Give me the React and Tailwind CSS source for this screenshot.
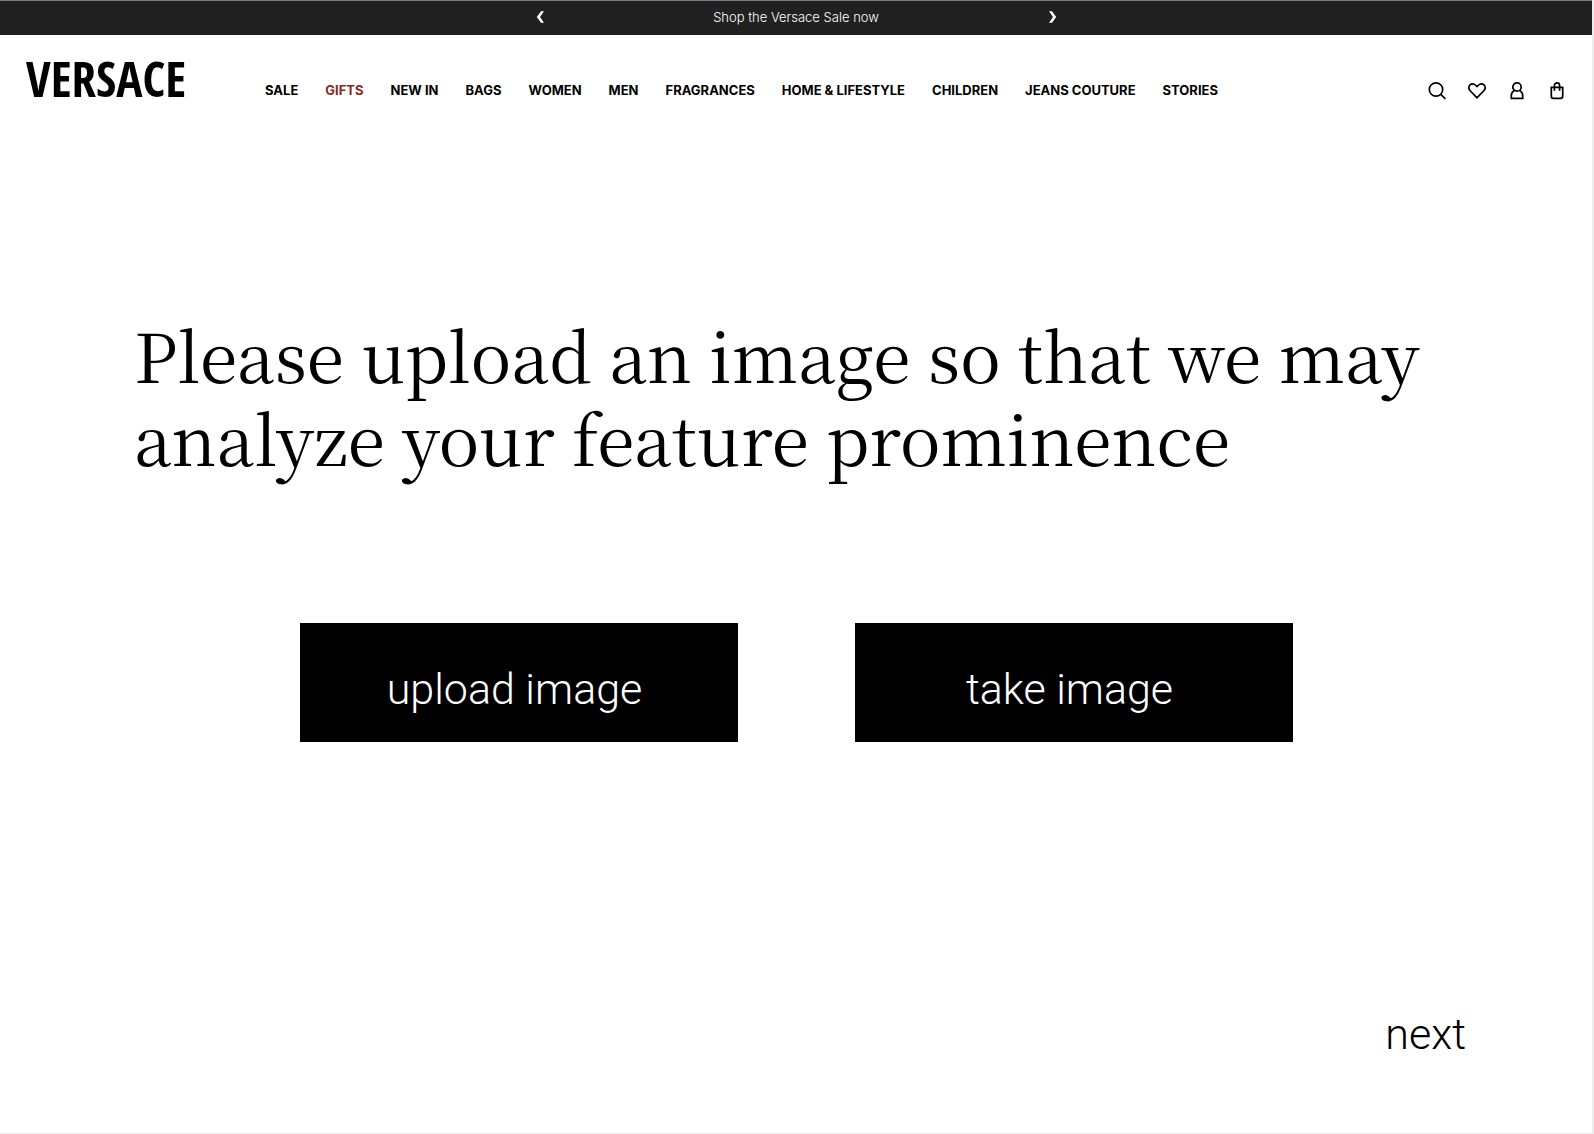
const links = [
  "SALE",
  "GIFTS",
  "NEW IN",
  "BAGS",
  "WOMEN",
  "MEN",
  "FRAGRANCES",
  "HOME & LIFESTYLE",
  "CHILDREN",
  "JEANS COUTURE",
  "STORIES",
];

const icons = [
  {
    label: "Search",
    shape: (
      <>
        <circle cx="9" cy="8.500" r="6.700" />
        <path d="M13.800 13.300 18.500 18" />
      </>
    ),
  },
  {
    label: "Wishlist",
    shape: (
      <path d="M10 16.800 3.400 10C1.600 8.100 1.500 5.500 3 3.900c1.500-1.500 4-1.500 5.400.1L10 5.600l1.600-1.600C13 2.400 15.500 2.400 17 3.900c1.500 1.600 1.400 4.200-.4 6.100Z" />
    ),
  },
  {
    label: "Account",
    shape: (
      <>
        <circle cx="10" cy="6" r="4.200" />
        <path d="M7.300 9.600C5.300 10.800 4.300 12.500 4.300 14.600V17.300H15.700V14.600C15.700 12.500 14.700 10.800 12.700 9.600" />
      </>
    ),
  },
  {
    label: "Shopping bag",
    shape: (
      <>
        <path d="M4.300 6.300H15.700V15.300Q15.700 17.300 13.700 17.300H6.300Q4.300 17.300 4.300 15.300Z" />
        <path d="M7.400 9.700V4.400a2.600 2.600 0 0 1 5.200 0V9.700" />
      </>
    ),
  },
];

function Arrow({ label, d }) {
  return (
    <button type="button" aria-label={label} className="flex h-6 w-6 items-center justify-center">
      <svg viewBox="0 0 8 12" className="h-3 w-2" fill="#fff" aria-hidden="true">
        <path d={d} />
      </svg>
    </button>
  );
}

function ActionButton({ children }) {
  return (
    <button
      type="button"
      className="h-[119px] w-[438px] bg-black pt-3 pr-2 text-[43px] leading-[52px] font-light text-white"
    >
      {children}
    </button>
  );
}

export default function App() {
  return (
    <div className="flex min-h-screen flex-col border-r-2 border-b border-[#ececec] bg-white font-['Roboto',sans-serif] text-black">
      <div className="flex h-[35px] items-center justify-center border-t border-[#7d8080] bg-[#212121] pb-0.5">
        <div className="flex w-[537px] items-center justify-between">
          <Arrow label="Previous message" d="M5 0.300H8L4 6 8 11.700H5L0.800 6Z" />
          <a href="#sale" className="font-['Inter',sans-serif] text-[13px] leading-5 font-light text-white">
            Shop the Versace Sale now
          </a>
          <Arrow label="Next message" d="M3 0.300H0L4 6 0 11.700H3L7.200 6Z" />
        </div>
      </div>

      <header className="flex items-center pt-[19px] pr-[25px] pl-[26px]">
        <a
          href="#home"
          className="mr-[79px] font-['Open_Sans_Condensed','Open_Sans',sans-serif] text-[49px] leading-[48px] font-extrabold"
        >
          VERSACE
        </a>
        <nav className="flex gap-[27px] pt-6">
          {links.map((link) => (
            <a
              key={link}
              href={"#" + link.toLowerCase().replace(/\W+/g, "-")}
              className={
                link === "GIFTS"
                  ? "font-['Inter',sans-serif] text-[13px] leading-5 font-bold whitespace-nowrap text-[#862a26]"
                  : "font-['Inter',sans-serif] text-[13px] leading-5 font-bold whitespace-nowrap"
              }
            >
              {link}
            </a>
          ))}
        </nav>
        <div className="ml-auto flex gap-5 pt-[26px]">
          {icons.map(({ label, shape }) => (
            <button key={label} type="button" aria-label={label} className="h-5 w-5">
              <svg viewBox="0 0 20 20" className="h-5 w-5" fill="none" stroke="#000" strokeWidth="1.7" aria-hidden="true">
                {shape}
              </svg>
            </button>
          ))}
        </div>
      </header>

      <main className="flex grow flex-col pt-[210px]">
        <h1 className="px-[134px] font-['Noto_Serif_CJK_SC',serif] text-[68px] leading-[83px] font-normal">
          Please upload an image so that we may analyze your feature prominence
        </h1>
        <div className="mt-[145px] flex justify-center gap-[117px]">
          <ActionButton>upload image</ActionButton>
          <ActionButton>take image</ActionButton>
        </div>
        <div className="mt-auto flex justify-end pr-[126px] pb-[73px]">
          <button type="button" className="text-[43px] leading-[52px] font-light">
            next
          </button>
        </div>
      </main>
    </div>
  );
}
